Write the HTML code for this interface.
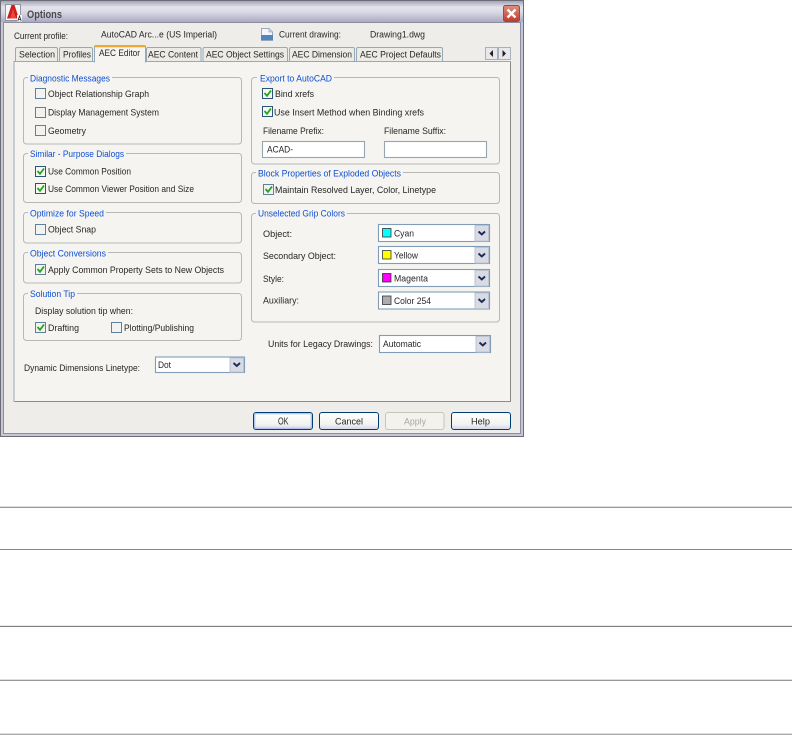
<!DOCTYPE html>
<html><head><meta charset="utf-8"><title>Options</title>
<style>
html,body{margin:0;padding:0;background:#fff;width:792px;height:735px;overflow:hidden}
svg{display:block;position:absolute;left:0;top:0}
text{font-family:"Liberation Sans",sans-serif;font-size:9.6px;fill:#262626}
.b{fill:#0f4fd2}
.d{fill:#a8a8a0}
.g{fill:none;stroke:#b7b7b4;stroke-width:1}
.cb{fill:#f2f2ee;stroke:#5f7f9c;stroke-width:1}
.cc{fill:#f7f7f4;stroke:#2c5478;stroke-width:1}
.ck{fill:none;stroke:#22a51f;stroke-width:1.8}
.cm{fill:#fff;stroke:#7f9db9;stroke-width:1.1}
.ab{fill:#d9dbe4;stroke:#bcc3d0;stroke-width:1}
.ar{fill:none;stroke:#1d2a55;stroke-width:1.9}
.tab{fill:#ecebe6;stroke:#96a9b5;stroke-width:1}
.btn{fill:url(#bg);stroke:#003c74;stroke-width:1}
.ln{fill:#999}
</style></head>
<body>
<svg width="792" height="735" viewBox="0 0 792 735" xmlns="http://www.w3.org/2000/svg">
<defs>
<linearGradient id="tg" x1="0" y1="0" x2="0" y2="1"><stop offset="0" stop-color="#a4a4ba"/><stop offset=".3" stop-color="#e4e4ec"/><stop offset=".55" stop-color="#d8d8e4"/><stop offset="1" stop-color="#a9a9c2"/></linearGradient>
<linearGradient id="bg" x1="0" y1="0" x2="0" y2="1"><stop offset="0" stop-color="#fff"/><stop offset=".7" stop-color="#f2f2f0"/><stop offset="1" stop-color="#cfd6ee"/></linearGradient>
<linearGradient id="cl" x1="0" y1="0" x2="0" y2="1"><stop offset="0" stop-color="#e0907c"/><stop offset="1" stop-color="#c03a30"/></linearGradient>
<filter id="soft" x="0" y="0" width="100%" height="100%"><feGaussianBlur stdDeviation="0.32"/></filter>
</defs>

<g filter="url(#soft)">
<!-- dialog frame -->
<rect x="0" y="0" width="524" height="437" fill="#6d6d78"/>
<rect x="1" y="1" width="522" height="435" fill="#c6c6d8"/>
<rect x="1" y="1" width="522" height="21" fill="url(#tg)"/>
<rect x="3.5" y="22.5" width="517" height="411" fill="#eeedea" stroke="#8d8da0"/>
<!-- titlebar -->
<rect x="5.5" y="4.5" width="15" height="16" fill="#f6f6f8" stroke="#77777f" stroke-width=".7"/>
<path d="M7 18.5 L11.5 5 L14.5 5 L19 18.5 L15.8 18.5 L13 9.5 L10.5 18.5Z" fill="#cf1f1a"/>
<path d="M10.5 18.5 L13 9.5 L15.8 18.5Z" fill="#e8453a"/>
<rect x="17" y="15" width="5" height="6.5" fill="#fff"/>
<path d="M17.8 21 L19.5 16 L21.2 21 M18.5 19.4 H20.5" fill="none" stroke="#222" stroke-width=".8"/>
<text x="27" y="18" textLength="35" lengthAdjust="spacingAndGlyphs" style="font-size:11px;font-weight:bold;fill:#484850">Options</text>
<rect x="503.5" y="5.5" width="16" height="16" rx="2" fill="url(#cl)" stroke="#9a4a48"/>
<path d="M507.5 9.5 L515.5 17.5 M515.5 9.5 L507.5 17.5" stroke="#fff" stroke-width="2.4"/>

<!-- header row -->
<text x="14" y="39" textLength="54" lengthAdjust="spacingAndGlyphs">Current profile:</text>
<text x="101" y="37.5" textLength="116" lengthAdjust="spacingAndGlyphs">AutoCAD Arc...e (US Imperial)</text>
<path d="M261.5 28.5 H269 L272.5 32 V40.5 H261.5Z" fill="#f4f6fa" stroke="#9ca6b4"/>
<path d="M269 28.5 V32 H272.5" fill="#cdd6e6" stroke="#9ca6b4" stroke-width=".7"/>
<rect x="261" y="35" width="12" height="5" fill="#4f86c0"/>
<text x="279" y="37.5" textLength="62" lengthAdjust="spacingAndGlyphs">Current drawing:</text>
<text x="370" y="37.5" textLength="55" lengthAdjust="spacingAndGlyphs">Drawing1.dwg</text>

<!-- tabs -->
<path class="tab" d="M15.5 61.5 V49 Q15.5 47.5 17 47.5 H56 Q57.5 47.5 57.5 49 V61.5"/>
<path class="tab" d="M59.5 61.5 V49 Q59.5 47.5 61 47.5 H90.5 Q92.5 47.5 92.5 49 V61.5"/>
<path class="tab" d="M146.5 61.5 V49 Q146.5 47.5 148 47.5 H199.5 Q201 47.5 201 49 V61.5"/>
<path class="tab" d="M203 61.5 V49 Q203 47.5 204.5 47.5 H286 Q287.5 47.5 287.5 49 V61.5"/>
<path class="tab" d="M289.5 61.5 V49 Q289.5 47.5 291 47.5 H353 Q354.5 47.5 354.5 49 V61.5"/>
<path class="tab" d="M356.5 61.5 V49 Q356.5 47.5 358 47.5 H441 Q442.5 47.5 442.5 49 V61.5"/>

<!-- page -->
<rect x="14" y="61.5" width="496.5" height="340" fill="#f5f4f0" stroke="#9aa8b2"/>
<path d="M15 401.5 H510.5 V62" fill="none" stroke="#8a8a86" stroke-width="1"/>
<path d="M94.5 62.5 V47 Q94.5 45.5 96 45.5 H144 Q145.5 45.5 145.5 47 V62.5" fill="#f5f4f0" stroke="#96a9b5"/>
<rect x="94.5" y="45" width="51" height="2.2" rx="1" fill="#eda92e"/>

<text x="19" y="57.5" textLength="36" lengthAdjust="spacingAndGlyphs">Selection</text>
<text x="63" y="57.5" textLength="28" lengthAdjust="spacingAndGlyphs">Profiles</text>
<text x="99" y="56" textLength="41" lengthAdjust="spacingAndGlyphs">AEC Editor</text>
<text x="148" y="57.5" textLength="50" lengthAdjust="spacingAndGlyphs">AEC Content</text>
<text x="206" y="57.5" textLength="78" lengthAdjust="spacingAndGlyphs">AEC Object Settings</text>
<text x="292" y="57.5" textLength="60" lengthAdjust="spacingAndGlyphs">AEC Dimension</text>
<text x="360" y="57.5" textLength="81" lengthAdjust="spacingAndGlyphs">AEC Project Defaults</text>

<!-- tab scroll -->
<rect x="485.5" y="47.5" width="12" height="12" fill="#e8e8ec" stroke="#a8b0bc"/>
<rect x="498.5" y="47.5" width="12" height="12" fill="#e8e8ec" stroke="#a8b0bc"/>
<path d="M493 50 L489.5 53.5 L493 57Z" fill="#222"/>
<path d="M502.5 50 L506 53.5 L502.5 57Z" fill="#222"/>

<!-- group boxes -->
<rect class="g" x="23.5" y="77.5" width="218" height="66.5" rx="3"/>
<rect class="g" x="23.5" y="153.5" width="218" height="49" rx="3"/>
<rect class="g" x="23.5" y="212.5" width="218" height="30.5" rx="3"/>
<rect class="g" x="23.5" y="252.5" width="218" height="30.5" rx="3"/>
<rect class="g" x="23.5" y="293.5" width="218" height="47" rx="3"/>
<rect class="g" x="251.5" y="77.5" width="248" height="86.5" rx="3"/>
<rect class="g" x="251.5" y="172.5" width="248" height="31" rx="3"/>
<rect class="g" x="251.5" y="213.5" width="248" height="108.5" rx="3"/>
<!-- legend backgrounds -->
<g fill="#f5f4f0">
<rect x="28" y="74" width="84" height="8"/><rect x="28" y="150" width="98" height="8"/>
<rect x="28" y="209" width="78" height="8"/><rect x="28" y="249" width="80" height="8"/>
<rect x="28" y="290" width="49" height="8"/><rect x="257" y="74" width="77" height="8"/>
<rect x="256" y="169" width="147" height="8"/><rect x="256" y="210" width="91" height="8"/>
</g>
<text class="b" x="30" y="81.5" textLength="80" lengthAdjust="spacingAndGlyphs">Diagnostic Messages</text>
<text class="b" x="30" y="157" textLength="94" lengthAdjust="spacingAndGlyphs">Similar - Purpose Dialogs</text>
<text class="b" x="30" y="216.5" textLength="74" lengthAdjust="spacingAndGlyphs">Optimize for Speed</text>
<text class="b" x="30" y="256.5" textLength="76" lengthAdjust="spacingAndGlyphs">Object Conversions</text>
<text class="b" x="30" y="297" textLength="45" lengthAdjust="spacingAndGlyphs">Solution Tip</text>
<text class="b" x="260" y="81.5" textLength="72" lengthAdjust="spacingAndGlyphs">Export to AutoCAD</text>
<text class="b" x="258" y="176.5" textLength="143" lengthAdjust="spacingAndGlyphs">Block Properties of Exploded Objects</text>
<text class="b" x="258" y="216.5" textLength="87" lengthAdjust="spacingAndGlyphs">Unselected Grip Colors</text>

<!-- checkboxes left -->
<rect class="cb" x="35.5" y="88.5" width="10" height="10"/>
<rect class="cb" x="35.5" y="107.5" width="10" height="10"/>
<rect class="cb" x="35.5" y="125.5" width="10" height="10"/>
<rect class="cc" x="35.5" y="166.5" width="10" height="10"/>
<path class="ck" d="M37.5 171 L40 173.8 L44 168.5"/>
<rect class="cc" x="35.5" y="183.5" width="10" height="10"/>
<path class="ck" d="M37.5 188 L40 190.8 L44 185.5"/>
<rect class="cb" x="35.5" y="224.5" width="10" height="10"/>
<rect class="cb" x="35.5" y="264.5" width="10" height="10"/>
<path class="ck" d="M37.5 269 L40 271.8 L44 266.5"/>
<rect class="cb" x="35.5" y="322.5" width="10" height="10"/>
<path class="ck" d="M37.5 327 L40 329.8 L44 324.5"/>
<rect class="cb" x="111.5" y="322.5" width="10" height="10"/>

<text x="48" y="97" textLength="101" lengthAdjust="spacingAndGlyphs">Object Relationship Graph</text>
<text x="48" y="115.5" textLength="111" lengthAdjust="spacingAndGlyphs">Display Management System</text>
<text x="48" y="134" textLength="38" lengthAdjust="spacingAndGlyphs">Geometry</text>
<text x="48" y="174.5" textLength="83" lengthAdjust="spacingAndGlyphs">Use Common Position</text>
<text x="48" y="192" textLength="146" lengthAdjust="spacingAndGlyphs">Use Common Viewer Position and Size</text>
<text x="48" y="232.5" textLength="48" lengthAdjust="spacingAndGlyphs">Object Snap</text>
<text x="48" y="273" textLength="176" lengthAdjust="spacingAndGlyphs">Apply Common Property Sets to New Objects</text>
<text x="35" y="314" textLength="98" lengthAdjust="spacingAndGlyphs">Display solution tip when:</text>
<text x="48" y="331" textLength="31" lengthAdjust="spacingAndGlyphs">Drafting</text>
<text x="124" y="331" textLength="70" lengthAdjust="spacingAndGlyphs">Plotting/Publishing</text>
<text x="24" y="371" textLength="116" lengthAdjust="spacingAndGlyphs">Dynamic Dimensions Linetype:</text>

<!-- left combo -->
<rect class="cm" x="155.5" y="357" width="89" height="15.5"/>
<rect class="ab" x="230" y="358" width="13.5" height="14"/>
<path class="ar" d="M233.5 363 L236.8 366 L240 363"/>
<text x="158" y="368" textLength="13" lengthAdjust="spacingAndGlyphs">Dot</text>

<!-- right checks -->
<rect class="cc" x="262.5" y="88.5" width="10" height="10"/>
<path class="ck" d="M264.5 93 L267 95.8 L271 90.5"/>
<rect class="cc" x="262.5" y="106.5" width="10" height="10"/>
<path class="ck" d="M264.5 111 L267 113.8 L271 108.5"/>
<rect class="cb" x="263.5" y="184.5" width="10" height="10"/>
<path class="ck" d="M265.5 189 L268 191.8 L272 186.5"/>
<text x="275" y="97" textLength="39" lengthAdjust="spacingAndGlyphs">Bind xrefs</text>
<text x="274" y="115.5" textLength="150" lengthAdjust="spacingAndGlyphs">Use Insert Method when Binding xrefs</text>
<text x="263" y="134" textLength="61" lengthAdjust="spacingAndGlyphs">Filename Prefix:</text>
<text x="384" y="134" textLength="62" lengthAdjust="spacingAndGlyphs">Filename Suffix:</text>
<rect class="cm" x="262.5" y="141.5" width="102" height="16" style="stroke:#95a5b2"/>
<rect class="cm" x="384.5" y="141.5" width="102" height="16" style="stroke:#95a5b2"/>
<text x="267" y="152.5" textLength="26" lengthAdjust="spacingAndGlyphs">ACAD-</text>
<text x="275" y="193" textLength="161" lengthAdjust="spacingAndGlyphs">Maintain Resolved Layer, Color, Linetype</text>

<!-- grip colours -->
<text x="263" y="237" textLength="29" lengthAdjust="spacingAndGlyphs">Object:</text>
<text x="263" y="259" textLength="73" lengthAdjust="spacingAndGlyphs">Secondary Object:</text>
<text x="263" y="282" textLength="21" lengthAdjust="spacingAndGlyphs">Style:</text>
<text x="263" y="303.5" textLength="36" lengthAdjust="spacingAndGlyphs">Auxiliary:</text>

<rect class="cm" x="378.5" y="224.5" width="111" height="17"/>
<rect class="ab" x="475" y="225.5" width="13.5" height="15.5"/>
<path class="ar" d="M478.5 231.5 L481.8 234.5 L485 231.5"/>
<rect x="382.5" y="228.5" width="8.5" height="8.5" fill="#00ffff" stroke="#333" stroke-width=".8"/>
<text x="394" y="236.5" textLength="20" lengthAdjust="spacingAndGlyphs">Cyan</text>

<rect class="cm" x="378.5" y="246.5" width="111" height="17"/>
<rect class="ab" x="475" y="247.5" width="13.5" height="15.5"/>
<path class="ar" d="M478.5 253.5 L481.8 256.5 L485 253.5"/>
<rect x="382.5" y="250.5" width="8.5" height="8.5" fill="#ffff00" stroke="#333" stroke-width=".8"/>
<text x="394" y="258.5" textLength="24" lengthAdjust="spacingAndGlyphs">Yellow</text>

<rect class="cm" x="378.5" y="269.5" width="111" height="17"/>
<rect class="ab" x="475" y="270.5" width="13.5" height="15.5"/>
<path class="ar" d="M478.5 276.5 L481.8 279.5 L485 276.5"/>
<rect x="382.5" y="273.5" width="8.5" height="8.5" fill="#ff00ff" stroke="#333" stroke-width=".8"/>
<text x="394" y="281.5" textLength="34" lengthAdjust="spacingAndGlyphs">Magenta</text>

<rect class="cm" x="378.5" y="292" width="111" height="17"/>
<rect class="ab" x="475" y="293" width="13.5" height="15.5"/>
<path class="ar" d="M478.5 299 L481.8 302 L485 299"/>
<rect x="382.5" y="296" width="8.5" height="8.5" fill="#adadad" stroke="#333" stroke-width=".8"/>
<text x="394" y="304" textLength="37" lengthAdjust="spacingAndGlyphs">Color 254</text>

<text x="268" y="347" textLength="105" lengthAdjust="spacingAndGlyphs">Units for Legacy Drawings:</text>
<rect class="cm" x="379.5" y="335.5" width="111" height="17"/>
<rect class="ab" x="476" y="336.5" width="13.5" height="15.5"/>
<path class="ar" d="M479.5 342.5 L482.8 345.5 L486 342.5"/>
<text x="383" y="347" textLength="38" lengthAdjust="spacingAndGlyphs">Automatic</text>

<!-- buttons -->
<rect class="btn" x="253.5" y="412.5" width="59" height="17" rx="2.5"/>
<rect x="254.7" y="413.7" width="56.6" height="14.6" rx="1.5" fill="none" stroke="#a8c0ec" stroke-width="1.2"/>
<rect class="btn" x="319.5" y="412.5" width="59" height="17" rx="2.5"/>
<rect x="385.5" y="412.5" width="58.5" height="17" rx="2.5" fill="#f3f2ec" stroke="#c3c6bb"/>
<rect class="btn" x="451.5" y="412.5" width="59" height="17" rx="2.5"/>
<text x="278" y="424.5" textLength="10.5" lengthAdjust="spacingAndGlyphs" style="font-size:10px">OK</text>
<text x="335" y="424.5" textLength="28" lengthAdjust="spacingAndGlyphs">Cancel</text>
<text class="d" x="404" y="424.5" textLength="22" lengthAdjust="spacingAndGlyphs">Apply</text>
<text x="471" y="424.5" textLength="19" lengthAdjust="spacingAndGlyphs">Help</text>
</g>

<!-- rules below -->
<rect x="0" y="506" width="792" height="1" fill="#ddd"/>
<rect class="ln" x="0" y="507" width="792" height="1"/>
<rect x="0" y="549" width="792" height="1" fill="#888"/>
<rect x="0" y="625" width="792" height="1" fill="#e8e8e8"/>
<rect x="0" y="626" width="792" height="1" fill="#808080"/>
<rect x="0" y="679" width="792" height="1" fill="#ddd"/>
<rect class="ln" x="0" y="680" width="792" height="1"/>
<rect x="0" y="733" width="792" height="1" fill="#ddd"/>
<rect x="0" y="734" width="792" height="1" fill="#aaa"/>
</svg>
</body></html>
